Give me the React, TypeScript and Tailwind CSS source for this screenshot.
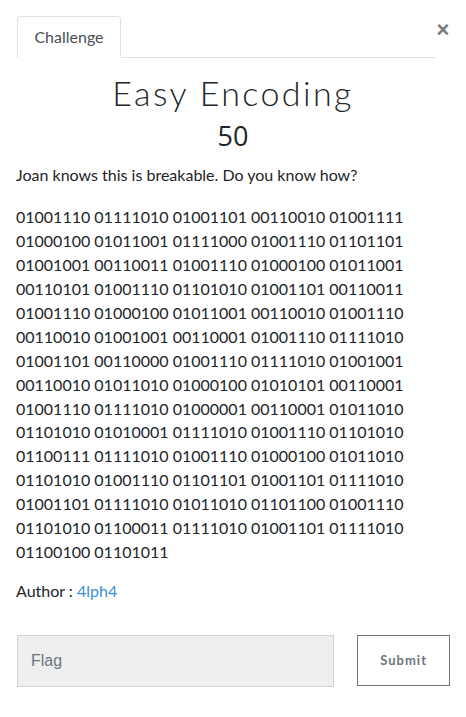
import React from "react";

const binary = "01001110 01111010 01001101 00110010 01001111 01000100 01011001 01111000 01001110 01101101 01001001 00110011 01001110 01000100 01011001 00110101 01001110 01101010 01001101 00110011 01001110 01000100 01011001 00110010 01001110 00110010 01001001 00110001 01001110 01111010 01001101 00110000 01001110 01111010 01001001 00110010 01011010 01000100 01010101 00110001 01001110 01111010 01000001 00110001 01011010 01101010 01010001 01111010 01001110 01101010 01100111 01111010 01001110 01000100 01011010 01101010 01001110 01101101 01001101 01111010 01001101 01111010 01011010 01101100 01001110 01101010 01100011 01111010 01001101 01111010 01100100 01101011";

export default function App() {
  return (
    <div className="w-[466px] h-[717px] bg-white text-[#212529] font-['Lato','Noto_Sans',sans-serif] overflow-hidden">
      <div className="flex items-start pt-[16px] pl-[17px] pr-[17px]">
        <div className="flex-1 flex border-b border-[#dee2e6]">
          <div className="h-[42px] w-[104px] -mb-px border border-[#dee2e6] border-b-white rounded-t-[4px] bg-white flex items-center justify-center text-[16px] text-[#495057]">
            Challenge
          </div>
        </div>
        <button className="w-[12px] mt-[2px] text-[22px] leading-[24px] font-bold text-[#7a7a7a] font-['Liberation_Sans',sans-serif] mr-0 ml-[1px] flex justify-center">
          ×
        </button>
      </div>
      <div className="px-[16px]">
        <h1 className="text-center text-[34px] leading-[40px] mt-[15px] font-light tracking-[2.4px]">Easy Encoding</h1>
        <h2 className="text-center text-[27px] leading-[36px] mt-[5px] font-normal font-['Open_Sans',sans-serif]">50</h2>
        <p className="text-[16px] leading-[24px] mt-[9px]">Joan knows this is breakable. Do you know how?</p>
        <p className="text-[16px] leading-[23.93px] mt-[18px] pr-[16px]">{binary}</p>
        <p className="text-[16px] leading-[24px] mt-[15px]">
          Author : <span className="text-[#3b8fd6]">4lph4</span>
        </p>
        <div className="flex mt-[32px] gap-[23px] pl-[1px]">
          <div className="w-[318px] h-[52px] bg-[#efefef] border border-[#ced4da] flex items-center pl-[13px] font-['Liberation_Sans',sans-serif] text-[16px] text-[#6c757d]">
            Flag
          </div>
          <button className="w-[93px] h-[51px] border border-[#6c757d] text-[#6c757d] text-[13px] font-bold tracking-[1px] flex items-center justify-center">
            Submit
          </button>
        </div>
      </div>
    </div>
  );
}
